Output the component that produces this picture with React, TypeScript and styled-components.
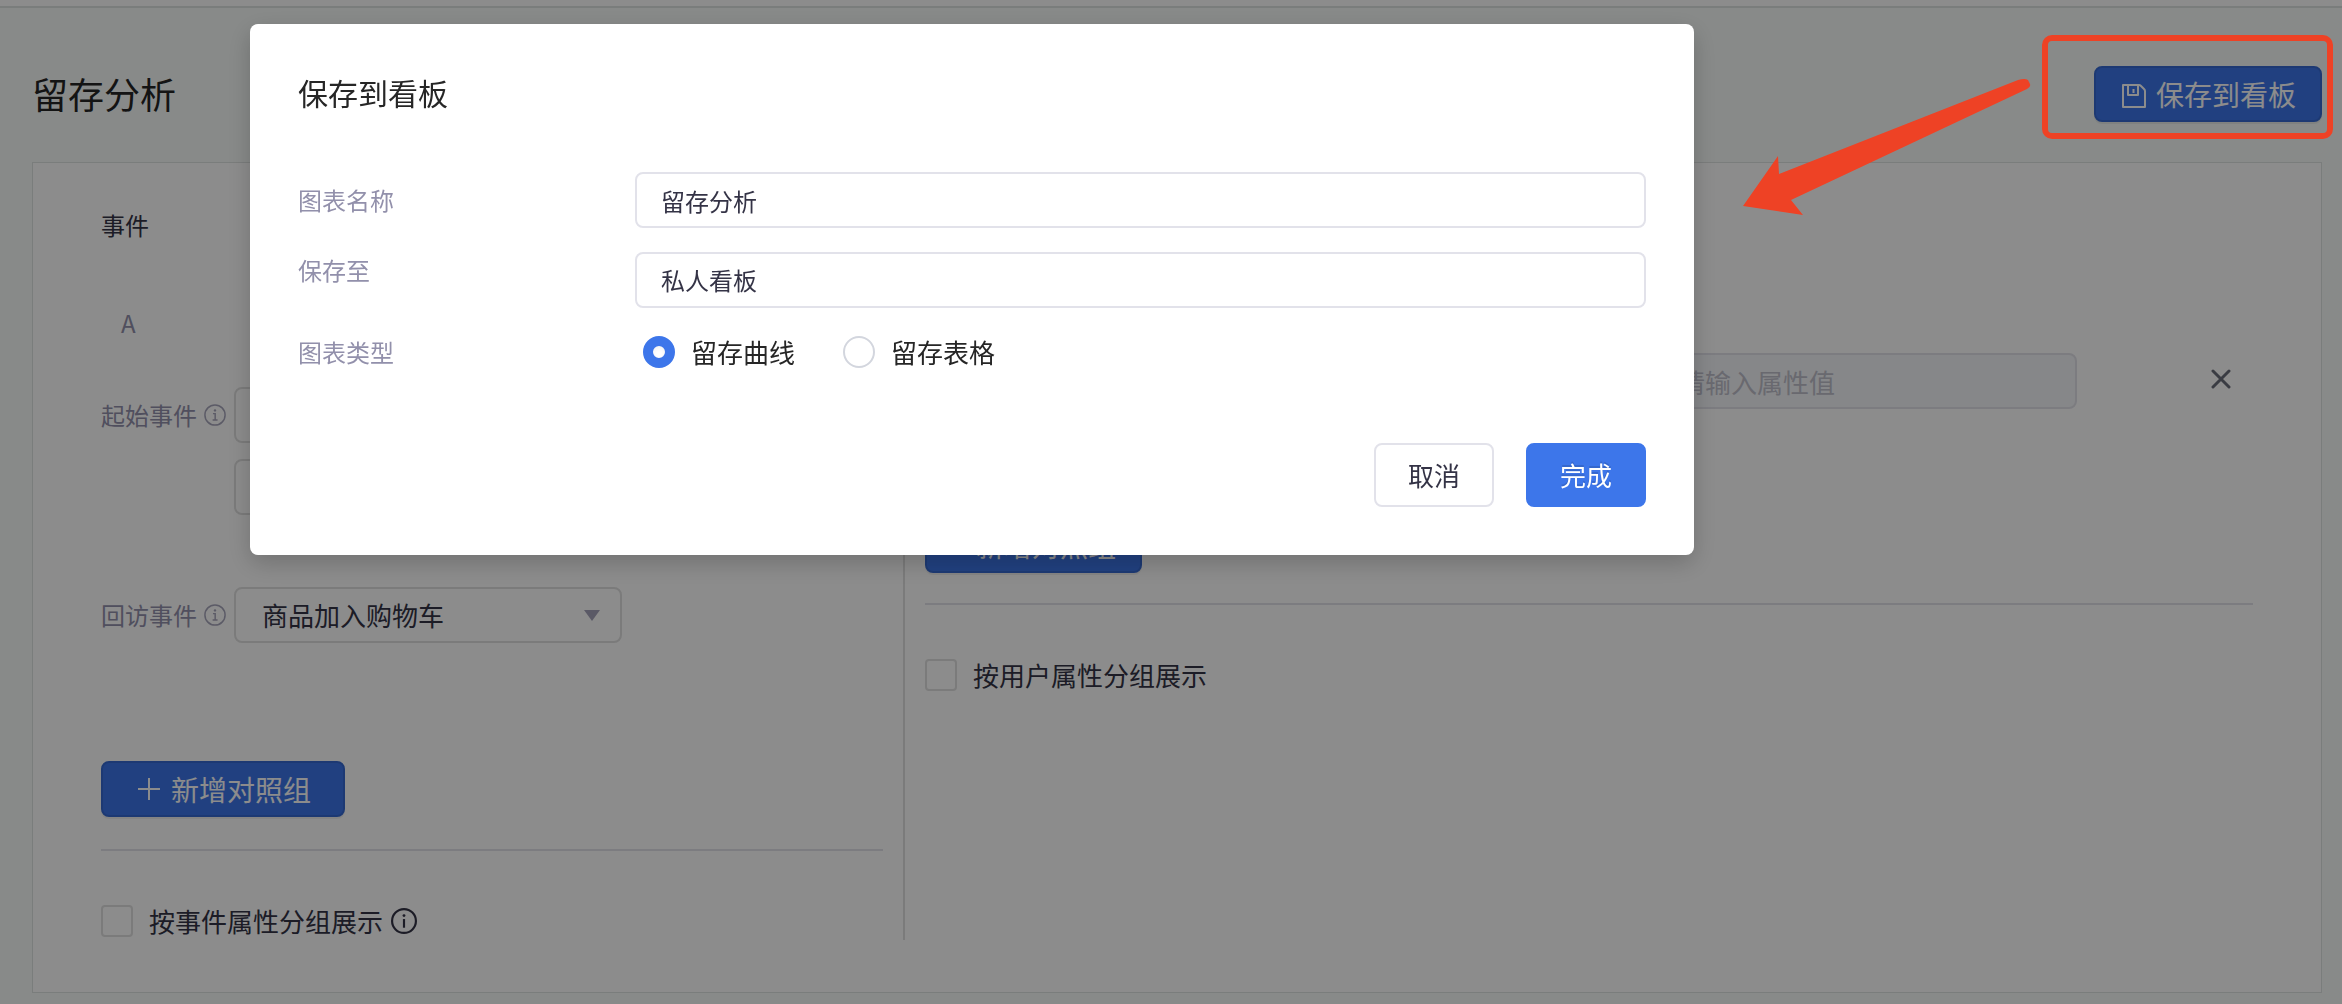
import React, { useState } from 'react';
import styled, { createGlobalStyle, css } from 'styled-components';

const c = {
  page: '#f7fbf9',
  card: '#ffffff',
  line: '#e2e2ea',
  control: '#e0e0e0',
  cardLine: '#dfe3e2',
  text: '#343346',
  title: '#262626',
  muted: '#9290ab',
  caret: '#a5a3ba',
  blue: '#3d76ea',
  blueLine: '#3569d2',
  red: '#ee4225',
};

const GlobalStyle = createGlobalStyle`
  *, *::before, *::after { box-sizing: border-box; }
  body {
    margin: 0;
    min-height: 100vh;
    background: ${c.page};
    color: ${c.text};
    font-family: 'Noto Sans CJK SC', sans-serif;
    font-weight: 400;
    font-size: 24px;
    line-height: 32px;
  }
  button, input, select { font: inherit; color: inherit; margin: 0; }
  h1, h2, h3, p { margin: 0; font-weight: inherit; }
`;

const TopBar = styled.div`
  height: 8px;
  background: ${c.card};
  border-bottom: 2px solid ${c.cardLine};
`;

const PageBody = styled.main`
  padding: 58px 20px 11px 32px;
`;

const PageHeader = styled.header`
  display: flex;
  align-items: flex-start;
  justify-content: space-between;
  margin-bottom: 40px;
`;

const PageTitle = styled.h1`
  font-size: 36px;
  line-height: 54px;
  color: ${c.title};
`;

const PrimaryButton = styled.button<{ $pad?: number }>`
  display: inline-flex;
  align-items: center;
  justify-content: center;
  gap: 8px;
  height: 56px;
  padding: 0 ${(p) => (p.$pad ?? 26) - 2}px;
  border: 2px solid ${c.blueLine};
  border-radius: 8px;
  background: ${c.blue};
  box-shadow: 0 2px 0 rgba(0, 0, 0, 0.06);
  color: #fff;
  font-size: 28px;
  white-space: nowrap;
`;

const Card = styled.section`
  display: grid;
  grid-template-columns: minmax(0, 782fr) 2px minmax(0, 1328fr);
  column-gap: 20px;
  padding: 46px 68px 52px;
  background: ${c.card};
  border: 1px solid ${c.cardLine};
`;

const Column = styled.div`
  display: flex;
  flex-direction: column;
  align-items: flex-start;
  padding-bottom: 3px;
`;

const Separator = styled.div`
  background: ${c.control};
`;

const ColumnTitle = styled.h2`
  font-size: 24px;
  line-height: 32px;
`;

const GroupName = styled.p`
  margin-top: 66px;
  padding-left: 20px;
  color: ${c.muted};
`;

const FieldRow = styled.div<{ $top: number }>`
  display: flex;
  align-items: center;
  margin-top: ${(p) => p.$top}px;
`;

const FieldLabel = styled.label`
  display: flex;
  align-items: center;
  gap: 7px;
  width: 133px;
  color: ${c.muted};
  white-space: nowrap;
`;

const SelectBox = styled.div`
  display: grid;
  align-items: center;
  width: 388px;

  > * { grid-area: 1 / 1; }
  > svg { justify-self: end; margin-right: 22px; pointer-events: none; }
`;

const Select = styled.select`
  appearance: none;
  width: 100%;
  height: 56px;
  padding: 0 48px 0 26px;
  border: 2px solid ${c.control};
  border-radius: 8px;
  background: transparent;
  font-size: 26px;
  line-height: 36px;
`;

const Spacer = styled.div<{ $h: number }>`
  height: ${(p) => p.$h}px;
`;

const Rule = styled.hr<{ $top: number; $bottom: number }>`
  width: 100%;
  height: 2px;
  margin: ${(p) => p.$top}px 0 ${(p) => p.$bottom}px;
  border: 0;
  background: ${c.line};
`;

const CheckLabel = styled.label`
  display: flex;
  align-items: center;
  gap: 16px;
  font-size: 26px;
`;

const Checkbox = styled.input`
  appearance: none;
  width: 32px;
  height: 32px;
  border: 2px solid ${c.control};
  border-radius: 4px;
  background: ${c.card};
`;

const CheckRow = styled.div`
  display: flex;
  align-items: center;
  gap: 8px;
`;

const FilterRow = styled.div`
  display: flex;
  align-items: center;
  width: 100%;
  margin-top: 112px;
  padding-right: 22px;
`;

const ValueInput = styled.input`
  width: 424px;
  height: 56px;
  margin-left: auto;
  padding: 0 24px;
  border: 2px solid ${c.line};
  border-radius: 8px;
  background: #f4f6fa;
  font-size: 26px;

  &::placeholder { color: #bfbfcb; opacity: 1; }
`;

const IconButton = styled.button`
  display: flex;
  margin-left: 134px;
  padding: 0;
  border: 0;
  background: none;
  color: #6b6e7a;
`;

const Overlay = styled.div`
  position: fixed;
  inset: 0;
  padding: 24px 24px 0 250px;
  background: rgba(0, 0, 0, 0.45);
`;

const Dialog = styled.form`
  width: 1444px;
  max-width: 100%;
  padding: 48px;
  border-radius: 8px;
  background: #fff;
  box-shadow: 0 8px 24px rgba(0, 0, 0, 0.2);
`;

const DialogTitle = styled.h2`
  margin-bottom: 60px;
  font-size: 30px;
  line-height: 40px;
  color: ${c.title};
`;

const DialogRow = styled.div<{ $align?: string }>`
  display: flex;
  align-items: ${(p) => p.$align ?? 'center'};
  min-height: 56px;
  margin-bottom: 24px;
`;

const DialogLabel = styled.label`
  flex: 0 0 337px;
  line-height: 36px;
  color: ${c.muted};
`;

const inputBase = css`
  appearance: none;
  flex: 1;
  min-width: 0;
  height: 56px;
  padding: 0 24px;
  border: 2px solid ${c.line};
  border-radius: 8px;
  background: #fff;
  color: ${c.text};
`;

const TextInput = styled.input`${inputBase}`;
const DialogSelect = styled.select`${inputBase}`;

const RadioRow = styled.div`
  display: flex;
  align-items: center;
  height: 40px;
`;

const RadioGroup = styled.div`
  display: flex;
  gap: 48px;
  padding-left: 8px;
`;

const RadioLabel = styled.label`
  display: flex;
  align-items: center;
  gap: 16px;
  font-size: 26px;
  color: ${c.title};
`;

const Radio = styled.input`
  appearance: none;
  width: 32px;
  height: 32px;
  border: 2px solid #d3d6de;
  border-radius: 50%;
  background: #fff;

  &:checked {
    border: 10px solid ${c.blue};
    box-shadow: inset 0 2px 4px rgba(0, 0, 0, 0.05);
  }
`;

const DialogFooter = styled.footer`
  display: flex;
  justify-content: flex-end;
  gap: 32px;
  margin-top: 71px;
`;

const DialogButton = styled.button<{ $primary?: boolean }>`
  width: 120px;
  height: 64px;
  padding: 0;
  border: 2px solid ${(p) => (p.$primary ? c.blue : c.line)};
  border-radius: 8px;
  background: ${(p) => (p.$primary ? c.blue : '#fff')};
  color: ${(p) => (p.$primary ? '#fff' : c.text)};
  font-size: 26px;
  ${(p) => p.$primary && css`text-shadow: 0 -2px 0 rgba(0, 0, 0, 0.12);`}
`;

const Callout = styled.div`
  position: fixed;
  top: 35px;
  right: 9px;
  width: 291px;
  height: 104px;
  border: 6px solid ${c.red};
  border-radius: 10px;
  pointer-events: none;
`;

const Arrow = styled.svg`
  position: fixed;
  top: 66px;
  right: 297px;
  pointer-events: none;
`;

const InfoIcon = ({ size, serif }: { size: number; serif?: boolean }) => (
  <svg
    width={size}
    height={size}
    viewBox="0 0 24 24"
    fill="none"
    stroke="currentColor"
    strokeWidth={serif ? 1.6 : 2}
    opacity={serif ? 0.8 : 1}
    aria-hidden="true"
  >
    <circle cx="12" cy="12" r="11" />
    <circle cx="12" cy="7" r="1.3" fill="currentColor" stroke="none" />
    {serif ? <path d="M9.8 10.5h2.4v6.8M9.4 17.4h5.4" /> : <path d="M12 10.2v8" />}
  </svg>
);

const SaveIcon = () => (
  <svg width="28" height="28" viewBox="0 0 28 28" fill="none" stroke="currentColor" strokeWidth="2" strokeLinejoin="round" aria-hidden="true">
    <path d="M3 5h16q1 0 2 1l3 3q1 1 1 2v16H3zM8 5v10h10V5M13.5 9v4" />
  </svg>
);

const PlusIcon = ({ size }: { size: number }) => (
  <svg width={size} height={size} viewBox="0 0 28 28" stroke="currentColor" strokeWidth="2" aria-hidden="true">
    <path d="M14 3v22M3 14h22" />
  </svg>
);

const CloseIcon = () => (
  <svg width="20" height="24" viewBox="0 0 20 24" stroke="currentColor" strokeWidth="3" strokeLinecap="round" aria-hidden="true">
    <path d="M2 2l16 16M18 2L2 18" />
  </svg>
);

const Caret = () => (
  <svg width="16" height="11" viewBox="0 0 16 11" aria-hidden="true">
    <path d="M0 0h16L8 11z" fill={c.caret} />
  </svg>
);

function EventSelect({ id, label, value }: { id: string; label?: string; value?: string }) {
  return (
    <SelectBox>
      <Select id={id} aria-label={label} defaultValue={value ?? ''}>
        <option>{value ?? ''}</option>
      </Select>
      <Caret />
    </SelectBox>
  );
}

export default function App() {
  const [name, setName] = useState('留存分析');
  const [kind, setKind] = useState('curve');

  return (
    <>
      <GlobalStyle />
      <TopBar />
      <PageBody>
        <PageHeader>
          <PageTitle>留存分析</PageTitle>
          <PrimaryButton type="button">
            <SaveIcon />
            保存到看板
          </PrimaryButton>
        </PageHeader>
        <Card>
          <Column>
            <ColumnTitle>事件</ColumnTitle>
            <GroupName>A</GroupName>
            <FieldRow $top={48}>
              <FieldLabel htmlFor="start-event">
                起始事件
                <InfoIcon size={22} serif />
              </FieldLabel>
              <EventSelect id="start-event" />
            </FieldRow>
            <FieldRow $top={16}>
              <FieldLabel as="span" />
              <EventSelect id="start-attribute" label="事件属性" />
            </FieldRow>
            <FieldRow $top={72}>
              <FieldLabel htmlFor="return-event">
                回访事件
                <InfoIcon size={22} serif />
              </FieldLabel>
              <EventSelect id="return-event" value="商品加入购物车" />
            </FieldRow>
            <Spacer $h={118} />
            <PrimaryButton type="button" $pad={34}>
              <PlusIcon size={28} />
              新增对照组
            </PrimaryButton>
            <Rule $top={32} $bottom={54} />
            <CheckRow>
              <CheckLabel>
                <Checkbox type="checkbox" />
                按事件属性分组展示
              </CheckLabel>
              <InfoIcon size={26} />
            </CheckRow>
          </Column>
          <Separator />
          <Column>
            <ColumnTitle>用户</ColumnTitle>
            <FilterRow>
              <ValueInput placeholder="请输入属性值" aria-label="属性值" disabled />
              <IconButton type="button" aria-label="删除">
                <CloseIcon />
              </IconButton>
            </FilterRow>
            <Spacer $h={108} />
            <PrimaryButton type="button">
              <PlusIcon size={17} />
              新增对照组
            </PrimaryButton>
            <Rule $top={30} $bottom={54} />
            <CheckLabel>
              <Checkbox type="checkbox" />
              按用户属性分组展示
            </CheckLabel>
          </Column>
        </Card>
      </PageBody>

      <Overlay>
        <Dialog role="dialog" aria-labelledby="dialog-title" onSubmit={(e: React.FormEvent) => e.preventDefault()}>
          <DialogTitle id="dialog-title">保存到看板</DialogTitle>
          <DialogRow>
            <DialogLabel htmlFor="chart-name">图表名称</DialogLabel>
            <TextInput id="chart-name" value={name} onChange={(e) => setName(e.target.value)} />
          </DialogRow>
          <DialogRow $align="flex-start">
            <DialogLabel htmlFor="board">保存至</DialogLabel>
            <DialogSelect id="board" defaultValue="私人看板">
              <option>私人看板</option>
            </DialogSelect>
          </DialogRow>
          <RadioRow role="radiogroup" aria-labelledby="kind-label">
            <DialogLabel as="span" id="kind-label">图表类型</DialogLabel>
            <RadioGroup>
              <RadioLabel>
                <Radio type="radio" name="kind" checked={kind === 'curve'} onChange={() => setKind('curve')} />
                留存曲线
              </RadioLabel>
              <RadioLabel>
                <Radio type="radio" name="kind" checked={kind === 'table'} onChange={() => setKind('table')} />
                留存表格
              </RadioLabel>
            </RadioGroup>
          </RadioRow>
          <DialogFooter>
            <DialogButton type="button">取消</DialogButton>
            <DialogButton type="submit" $primary>完成</DialogButton>
          </DialogFooter>
        </Dialog>
      </Overlay>

      <Callout />
      <Arrow width="310" height="155" viewBox="0 0 310 155" aria-hidden="true">
        <path
          d="M8 140L43 90L44 108L283 14Q290 12 293 14L295 18Q296 21 292 23L56 134L68 149Z"
          fill={c.red}
        />
      </Arrow>
    </>
  );
}
